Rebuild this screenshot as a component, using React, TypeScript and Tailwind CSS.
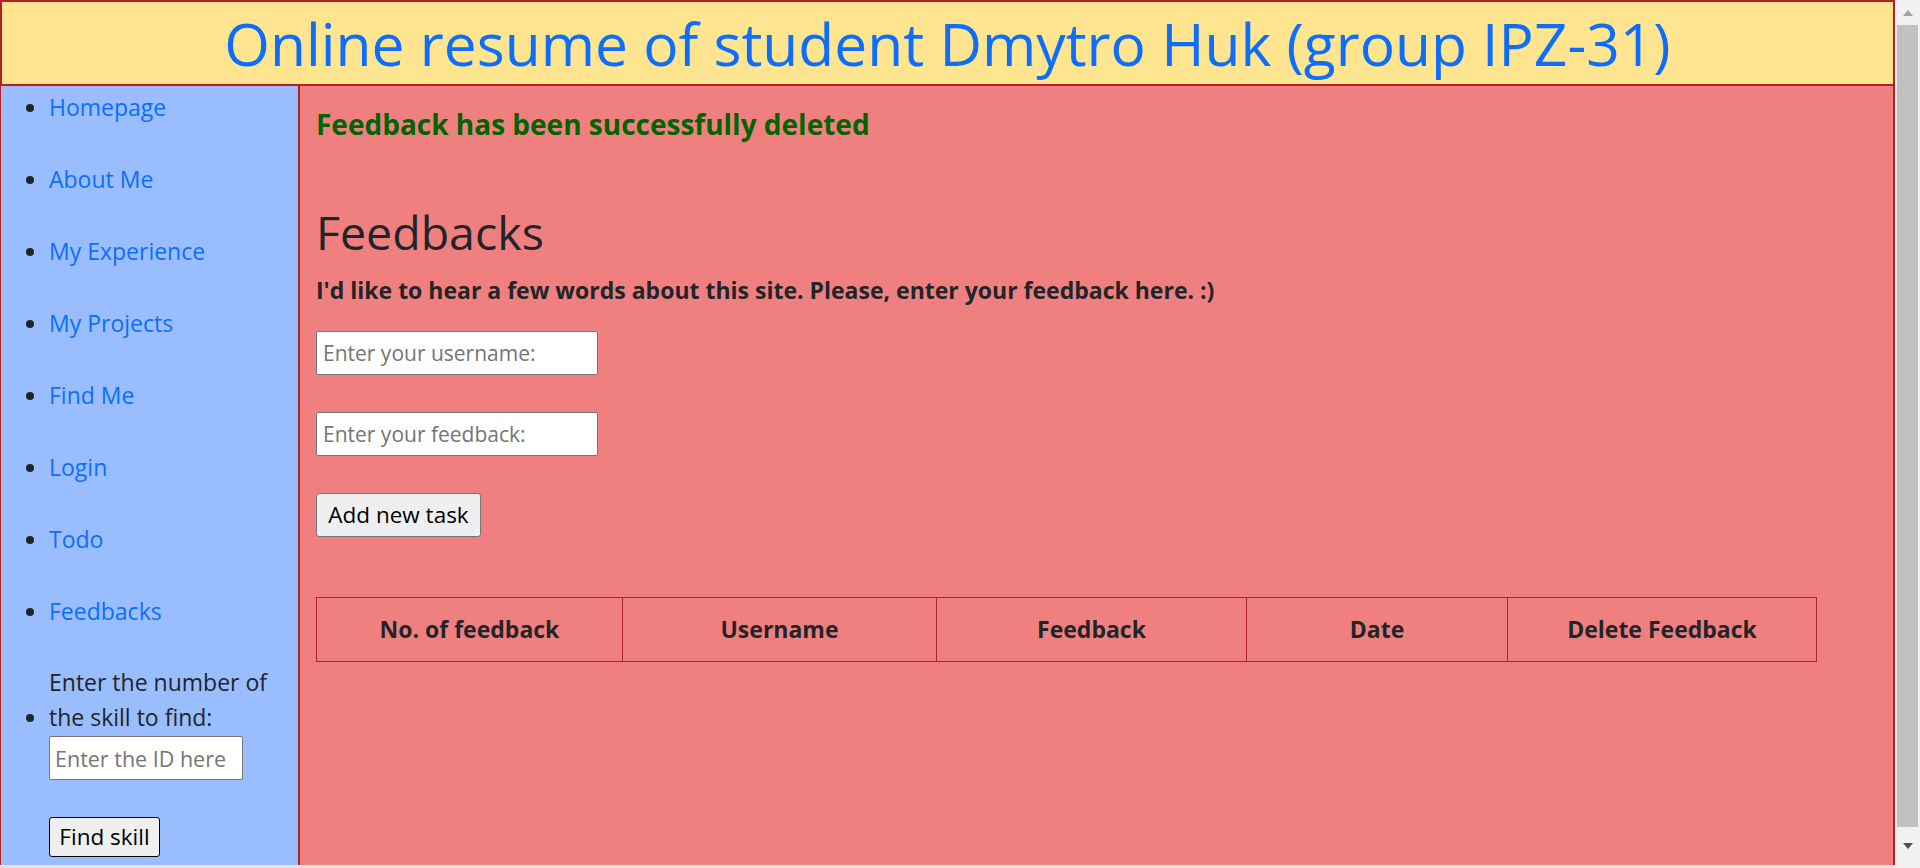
import React from 'react'

const navLinks = [
  'Homepage',
  'About Me',
  'My Experience',
  'My Projects',
  'Find Me',
  'Login',
  'Todo',
  'Feedbacks',
]

const columns = [
  { label: 'No. of feedback', width: 'w-[306px]' },
  { label: 'Username', width: 'w-[314px]' },
  { label: 'Feedback', width: 'w-[310px]' },
  { label: 'Date', width: 'w-[261px]' },
  { label: 'Delete Feedback', width: 'w-[309px]' },
]

function Scrollbar() {
  return (
    <div className="flex h-full w-[25px] shrink-0 flex-col items-center bg-[#f1f1f1]">
      <div className="flex h-[25px] w-full items-center justify-center">
        <svg width="10" height="6" viewBox="0 0 10 6">
          <path d="M5 0 L10 6 L0 6 Z" fill="#a3a3a3" />
        </svg>
      </div>
      <div className="h-[802px] w-[21px] bg-[#c1c1c1]" />
      <div className="flex h-[38px] w-full items-center justify-center">
        <svg width="10" height="6" viewBox="0 0 10 6">
          <path d="M0 0 L10 0 L5 6 Z" fill="#505050" />
        </svg>
      </div>
    </div>
  )
}

export default function App() {
  return (
    <div className="flex h-[868px] w-full overflow-hidden bg-white font-['Open_Sans','Noto_Sans',sans-serif] text-[#212529]">
      <div className="flex min-w-0 flex-1 flex-col">
        {/* Header */}
        <header className="flex h-[86px] shrink-0 items-center justify-center border-2 border-[#b22222] bg-[#ffe58f]">
          <h1 className="text-[58.7px] leading-none text-[#0d6efd]">
            Online resume of student Dmytro Huk (group IPZ-31)
          </h1>
        </header>

        <div className="flex min-h-0 flex-1">
          {/* Sidebar */}
          <aside className="w-[300px] shrink-0 border-r-2 border-l border-[#b22222] bg-[#99bdff] pt-[3px]">
            <ul className="list-disc pl-[48px] text-[23px]">
              {navLinks.map((link) => (
                <li key={link} className="mb-[36px] leading-[36px]">
                  <a href="#" className="text-[#0d6efd]">
                    {link}
                  </a>
                </li>
              ))}
              <li className="leading-[35px]">
                <label className="inline-block">
                  Enter the number of
                  <br />
                  the skill to find:
                </label>
                <input
                  type="text"
                  placeholder="Enter the ID here"
                  className="mt-[1px] block h-[44px] w-[194px] rounded-[2px] border border-[#767676] bg-white px-[5px] text-[21.5px] placeholder:text-[#757575]"
                />
                <button className="mt-[37px] h-[40px] w-[111px] rounded-[3px] border border-black bg-[#efefef] text-[22.5px] leading-none text-black">
                  Find skill
                </button>
              </li>
            </ul>
          </aside>

          {/* Main */}
          <main className="min-w-0 flex-1 border-r-2 border-[#b22222] bg-[#f08080] pl-4">
            <h4 className="mt-[20px] text-[28px] font-bold leading-[36px] text-[#006400]">
              Feedback has been successfully deleted
            </h4>

            <h1 className="mt-[62px] text-[46.5px] leading-[56px]">Feedbacks</h1>
            <h5 className="mt-[15px] text-[23px] font-bold leading-[30px]">
              I'd like to hear a few words about this site. Please, enter your feedback here. :)
            </h5>

            <div className="mt-[26px] flex flex-col items-start gap-[37px]">
              <input
                type="text"
                placeholder="Enter your username:"
                className="h-[44px] w-[282px] rounded-[2px] border border-[#767676] bg-white px-[6px] text-[21px] placeholder:text-[#757575]"
              />
              <input
                type="text"
                placeholder="Enter your feedback:"
                className="h-[44px] w-[282px] rounded-[2px] border border-[#767676] bg-white px-[6px] text-[21px] placeholder:text-[#757575]"
              />
              <button className="h-[44px] w-[165px] rounded-[3px] border border-[#767676] bg-[#efefef] text-[22.5px] leading-none text-black">
                Add new task
              </button>
            </div>

            <table className="mt-[60px] w-[1500px] table-fixed border-collapse">
              <thead>
                <tr className="h-[64px]">
                  {columns.map((col) => (
                    <th
                      key={col.label}
                      className={`${col.width} border border-[#b22222] text-center text-[23px] font-bold`}
                    >
                      {col.label}
                    </th>
                  ))}
                </tr>
              </thead>
            </table>
          </main>
        </div>
        <div className="h-[3px] shrink-0 bg-[#e6e6e6]" />
      </div>
      <Scrollbar />
    </div>
  )
}
